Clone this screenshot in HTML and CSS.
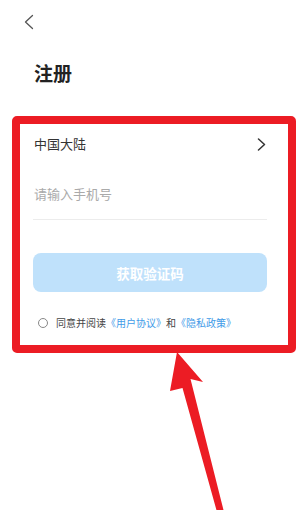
FILE: index.html
```html
<!DOCTYPE html>
<html lang="zh">
<head>
<meta charset="utf-8">
<link rel="stylesheet" href="styles.css">
</head>
<body>
<div class="page">
  <div class="topbar">
    <svg class="back" width="12" height="16" viewBox="0 0 12 16"><polyline points="9.5,1.5 2.5,8 9.5,14.5" fill="none" stroke="#555" stroke-width="1.3" stroke-linecap="round" stroke-linejoin="round"/></svg>
  </div>
  <h1 class="title">注册</h1>
  <div class="card">
    <div class="row country">
      <span>中国大陆</span>
      <svg class="chev" width="9" height="13" viewBox="0 0 9 13"><polyline points="1.5,1 7.5,6.5 1.5,12" fill="none" stroke="#333" stroke-width="1.5" stroke-linecap="round" stroke-linejoin="round"/></svg>
    </div>
    <div class="row phone">请输入手机号</div>
    <div class="btn">获取验证码</div>
    <div class="agree">
      <span class="radio"></span>
      <span class="txt">同意并阅读<a class="link">《用户协议》</a>和<a class="link">《隐私政策》</a></span>
    </div>
  </div>
  <svg class="arrow" width="300" height="510" viewBox="0 0 300 510"><polygon points="177,352 203,382 190.5,379 224,512 217,512 182.5,388 170,391" fill="#ec1c24"/></svg>
</div>
</body>
</html>
```
FILE: styles.css
```css
* { box-sizing: border-box; margin: 0; padding: 0; }
html, body { width: 300px; height: 510px; background: #fff; overflow: hidden; }
body { font-family: "Noto Sans CJK SC", "Noto Sans", sans-serif; color: #333; }
.page { position: relative; width: 300px; height: 510px; }
.topbar { height: 44px; padding: 14px 0 0 23px; }
.back { display: block; }
.title { font-size: 19px; font-weight: 700; color: #222; line-height: 26px; padding-left: 34px; margin-top: 16px; }
.card {
  margin: 30px 0 0 12px;
  width: 284px;
  border: 8px solid #ec1c24;
  border-radius: 5px;
  padding: 0 21px 15px 13px;
}
.row { display: flex; align-items: center; font-size: 13px; line-height: 16px; }
.country { height: 40px; justify-content: space-between; padding-left: 1px; padding-right: 1px; }
.chev { display: block; }
.phone { height: 56px; padding-top: 5px; color: #aaa; border-bottom: 1px solid #ececec; padding-left: 1px; }
.btn {
  margin-top: 33px;
  height: 39px;
  border-radius: 8px;
  background: #bfe1fb;
  color: #fff;
  font-size: 13.5px;
  font-weight: 700;
  display: flex; align-items: center; justify-content: center;
}
.agree { margin-top: 24px; height: 14px; display: flex; align-items: center; padding-left: 5px; }
.radio { width: 10px; height: 10px; border: 1px solid #888; border-radius: 50%; flex: none; }
.txt { margin-left: 8px; font-size: 10px; color: #444; white-space: nowrap; line-height: 14px; }
.link { color: #3f9be8; }
.arrow { position: absolute; left: 0; top: 0; }
```
